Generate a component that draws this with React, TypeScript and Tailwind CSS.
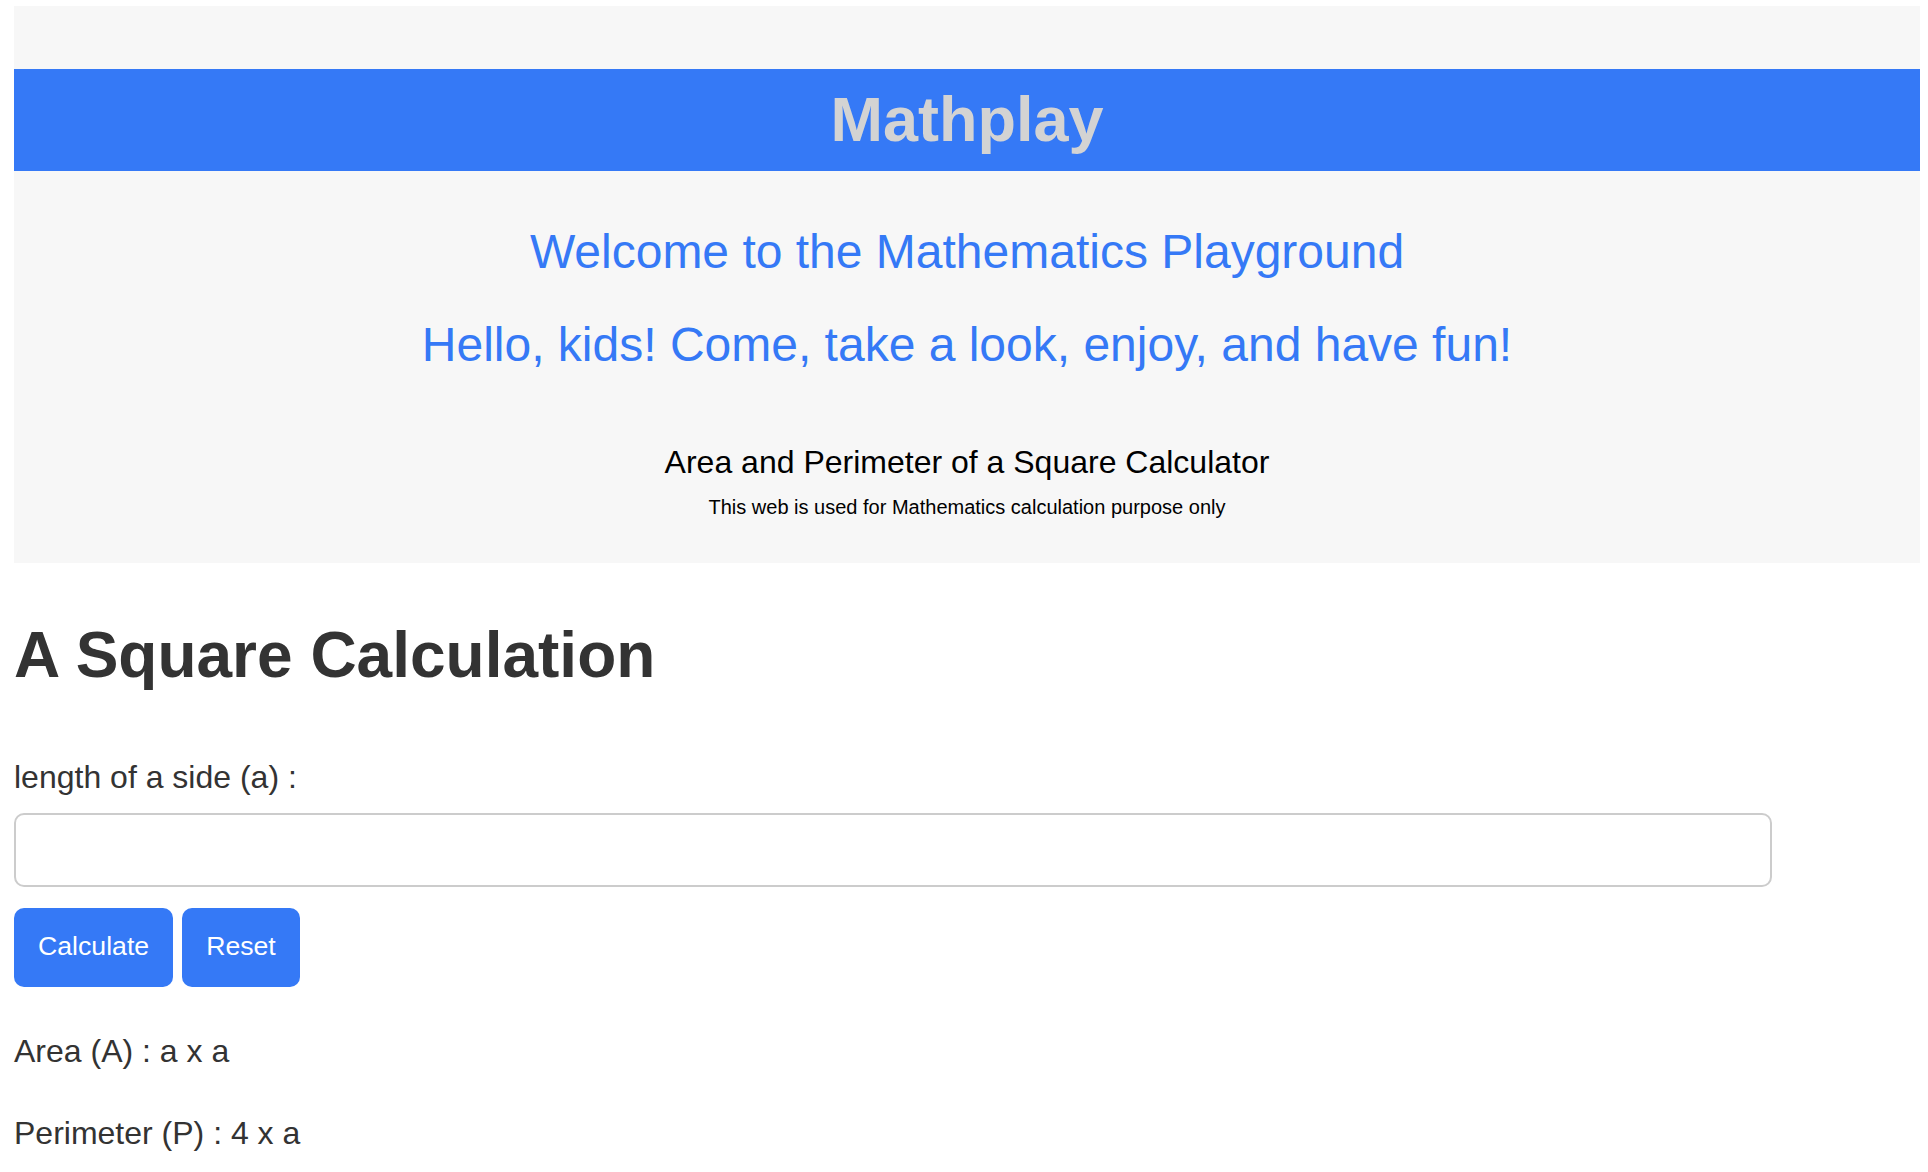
import React from "react";

const App = () => {
  return (
    <div className="min-h-screen bg-white pt-[6px] pl-[14px] pr-[8px] font-['Liberation_Sans',Arial,sans-serif] text-[#333]">
      {/* Header */}
      <div className="bg-[#f7f7f7] pt-[63px] pb-[44px] text-center">
        <div className="h-[102px] flex items-center justify-center bg-[#3579f6]">
          <h1 className="text-[63px] leading-[72px] font-bold text-[#d3d3d3] -mt-[3px]">
            Mathplay
          </h1>
        </div>
        <h2 className="mt-[53px] text-[48px] leading-[56px] text-[#3579f6]">
          Welcome to the Mathematics Playground
        </h2>
        <h2 className="mt-[37px] text-[48px] leading-[56px] text-[#3579f6]">
          Hello, kids! Come, take a look, enjoy, and have fun!
        </h2>
        <p className="mt-[70px] text-[32px] leading-[38px] text-black">
          Area and Perimeter of a Square Calculator
        </p>
        <p className="mt-[14px] text-[20px] leading-[24px] text-black">
          This web is used for Mathematics calculation purpose only
        </p>
      </div>

      {/* Calculator */}
      <h1 className="mt-[55px] text-[64px] leading-[74px] font-bold">
        A Square Calculation
      </h1>
      <label className="block mt-[66px] text-[32px] leading-[38px]">
        length of a side (a) :
      </label>
      <input
        type="text"
        className="block mt-[17px] w-[1758px] h-[74px] rounded-[10px] border-2 border-[#cccccc] bg-white px-4 text-[32px] outline-none"
      />
      <div className="flex gap-[9px] mt-[21px]">
        <button className="h-[79px] px-[24px] pb-[3px] rounded-[10px] bg-[#3579f6] text-white text-[26.67px]">
          Calculate
        </button>
        <button className="h-[79px] px-[24px] pb-[3px] rounded-[10px] bg-[#3579f6] text-white text-[26.67px]">
          Reset
        </button>
      </div>
      <p className="mt-[45px] text-[32px] leading-[38px]">Area (A) : a x a</p>
      <p className="mt-[44px] text-[32px] leading-[38px]">Perimeter (P) : 4 x a</p>
    </div>
  );
};

export default App;
